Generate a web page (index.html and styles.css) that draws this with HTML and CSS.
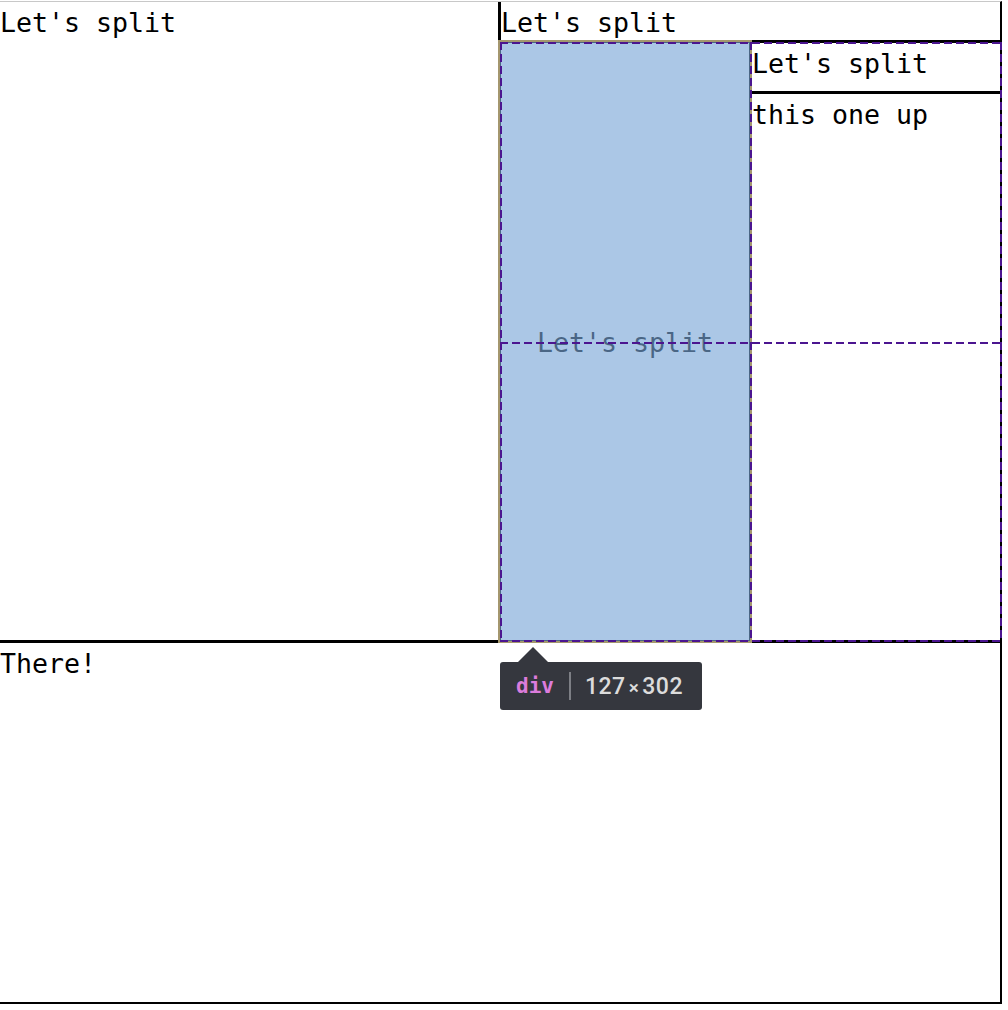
FILE: index.html
```html
<!DOCTYPE html>
<html lang="en">
<head>
    <meta charset="UTF-8">
    <meta name="viewport" content="width=device-width, initial-scale=1.0">
    <title>Split</title>
    <link rel="stylesheet" href="styles.css">
</head>
<body>
    <div class="frame">
        <div class="top">
            <div class="pane left">
                <div class="label">Let's split</div>
            </div>
            <div class="pane right">
                <div class="label head">Let's split</div>
                <div class="split">
                    <div class="cell center">
                        <div class="label">Let's split</div>
                    </div>
                    <div class="cell side">
                        <div class="label subhead">Let's split</div>
                        <div class="label">this one up</div>
                    </div>
                </div>
            </div>
        </div>
        <div class="pane bottom">
            <div class="label">There!</div>
        </div>
    </div>

    <!-- devtools highlight over the inspected div -->
    <div class="highlight"></div>
    <svg class="guides" width="1008" height="1010" viewBox="0 0 1008 1010">
        <g stroke="#4b1590" stroke-width="2" stroke-dasharray="8 4" fill="none">
            <line x1="500" y1="43" x2="1002" y2="43"/>
            <line x1="500" y1="641" x2="1002" y2="641"/>
            <line x1="501" y1="42" x2="501" y2="642"/>
            <line x1="751" y1="42" x2="751" y2="642"/>
            <line x1="1001" y1="42" x2="1001" y2="642"/>
            <line x1="500" y1="343" x2="1000" y2="343"/>
        </g>
    </svg>

    <div class="tooltip">
        <span class="tag">div</span>
        <span class="sep"></span>
        <span class="size">127<span class="times">×</span>302</span>
    </div>
</body>
</html>
```

FILE: styles.css
```css
body {
    margin: 0;
    padding-top: 1px;
    position: relative;
    background: #fff;
    font-family: "DejaVu Sans Mono", monospace;
}
.frame {
    width: 1000px;
    height: 1000px;
    border-top: 1px solid #c8c8c8;
    border-right: 2px solid #000;
    border-bottom: 2px solid #000;
    display: flex;
    flex-direction: column;
}
.top {
    height: 638px;
    border-bottom: 3px solid #000;
    display: flex;
}
.bottom {
    flex: 1;
}
.left {
    width: 498px;
    border-right: 3px solid #000;
}
.right {
    flex: 1;
    display: flex;
    flex-direction: column;
}
.label {
    font-size: 26.6px;
    line-height: 38px;
    padding-top: 2px;
    color: #000;
    white-space: nowrap;
}
.head {
    height: 36px;
    border-bottom: 3px solid #000;
}
.split {
    flex: 1;
    display: flex;
}
.center {
    width: 248px;
    border-right: 3px solid #000;
    display: flex;
    justify-content: center;
    align-items: center;
}
.side {
    flex: 1;
}
.subhead {
    height: 46px;
    border-bottom: 3px solid #000;
}
.highlight {
    position: absolute;
    left: 498px;
    top: 40px;
    width: 254px;
    height: 603px;
    box-sizing: border-box;
    border: 2px solid #a4976e;
    background: rgba(120, 165, 215, 0.62);
}
.guides {
    position: absolute;
    left: 0;
    top: 0;
    pointer-events: none;
}
.tooltip {
    position: absolute;
    left: 500px;
    top: 662px;
    width: 202px;
    height: 48px;
    box-sizing: border-box;
    padding: 0 16px;
    background: #35373e;
    border-radius: 3px;
    display: flex;
    align-items: center;
}
.tooltip::before {
    content: "";
    position: absolute;
    left: 18px;
    top: -15px;
    border-left: 15px solid transparent;
    border-right: 15px solid transparent;
    border-bottom: 15px solid #35373e;
}
.tag {
    color: #dc7cdc;
    font-weight: bold;
    font-size: 21px;
}
.sep {
    width: 2px;
    height: 28px;
    background: #7d7f85;
    margin: 0 14px 0 15px;
}
.size {
    color: #dcdcdc;
    font-family: Roboto, "Noto Sans", sans-serif;
    font-weight: 500;
    font-size: 23px;
    letter-spacing: 0.5px;
}
.times {
    margin: 0 3px;
    font-size: 19px;
}
```
